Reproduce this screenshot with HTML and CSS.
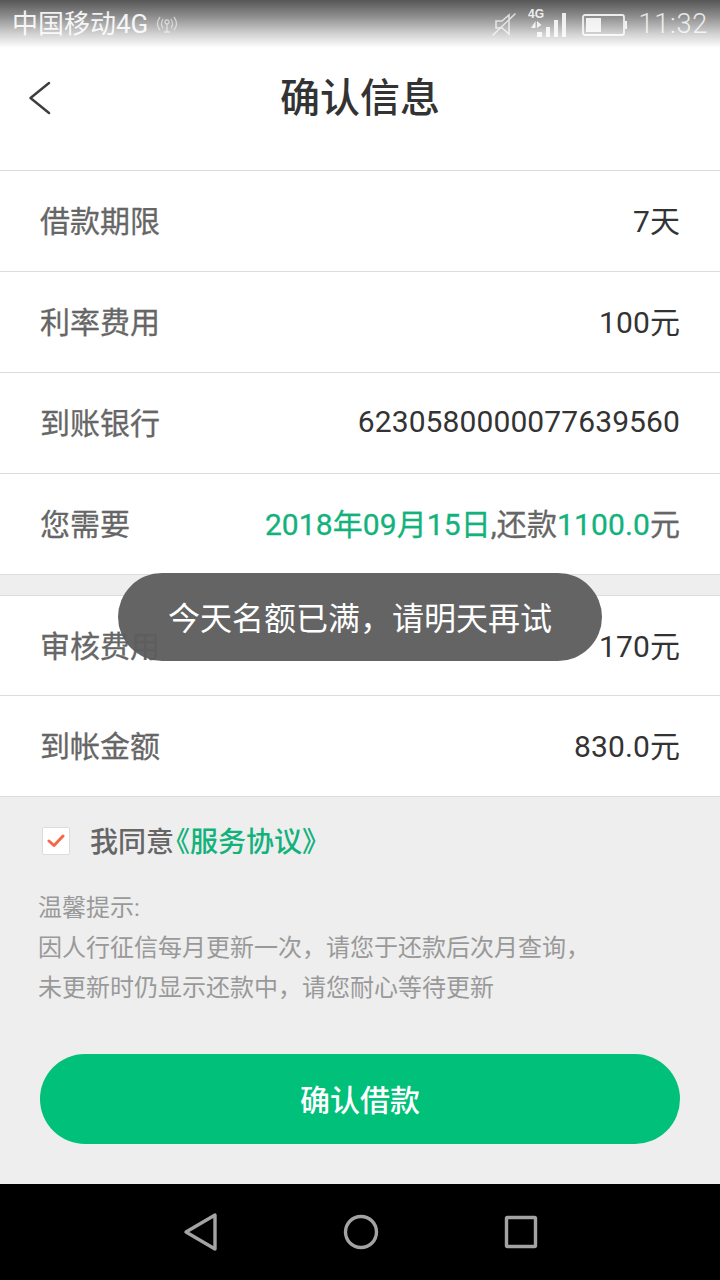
FILE: index.html
```html
<!DOCTYPE html>
<html lang="zh">
<head>
<meta charset="utf-8">
<title>确认信息</title>
<link rel="stylesheet" href="styles.css">
</head>
<body>
<div class="app">
  <div class="statusbar">
    <div class="status-left">
      <span class="carrier">中国移动4G</span>
      <svg class="hotspot" width="26" height="20" viewBox="0 0 26 20" fill="none" stroke="#fff" stroke-width="1.3" opacity=".55"><path d="M6 3Q1 10 6 16M9 5Q6 10 9 14M20 3Q25 10 20 16M17 5Q20 10 17 14"/><circle cx="13" cy="8" r="2"/><path d="M13 10V18M10 18H16"/></svg>
    </div>
    <div class="status-right">
      <svg width="26" height="26" viewBox="0 0 26 26" fill="none" stroke="#fff" stroke-width="1.6" opacity=".7"><path d="M5 10H11L18 4V23L11 17H5Z"/><path d="M1.500 24.500L24.500 2.500"/></svg>
      <svg class="signal" width="38" height="32" viewBox="0 0 38 32" fill="#fff" opacity=".85"><text x="0" y="10" class="net">4G</text><path d="M7.500 13V20H3L7.500 13ZM9 13L13.500 17L9 20ZM9 24H14V29H9ZM18 19H22V29H18ZM26 12H30V29H26ZM34 5H38V29H34Z"/></svg>
      <svg class="battery" width="46" height="24" viewBox="0 0 46 24" fill="none"><rect x="1" y="2" width="41" height="20" rx="2" stroke="#fff" stroke-width="1.800" opacity=".85"/><rect x="4" y="5" width="15" height="14" fill="#fff" opacity=".85"/><rect x="43" y="8" width="2" height="8" fill="#fff" opacity=".85"/></svg>
      <span class="time">11:32</span>
    </div>
  </div>

  <header class="navbar">
    <svg class="back" width="24" height="36" viewBox="0 0 24 36" fill="none" stroke="#3d3d3d" stroke-width="2.400" stroke-linecap="round" stroke-linejoin="round"><path d="M20 3L1.500 18L20 33"/></svg>
    <h1 class="title">确认信息</h1>
  </header>

  <section class="group">
    <div class="row"><span class="label">借款期限</span><span class="value">7天</span></div>
    <div class="row"><span class="label">利率费用</span><span class="value">100元</span></div>
    <div class="row"><span class="label">到账银行</span><span class="value">6230580000077639560</span></div>
    <div class="row"><span class="label">您需要</span><span class="value"><em class="green">2018年09月15日</em><span class="muted">,还款</span><em class="green">1100.0</em><span class="muted">元</span></span></div>
  </section>

  <section class="group second">
    <div class="row short"><span class="label">审核费用</span><span class="value">170元</span></div>
    <div class="row"><span class="label">到帐金额</span><span class="value">830.0元</span></div>
  </section>

  <main class="bottom">
    <div class="agree">
      <span class="check"><svg width="18" height="14" viewBox="0 0 18 14" fill="none" stroke="#f4684a" stroke-width="3" stroke-linecap="round" stroke-linejoin="round"><path d="M2 7L7 11.500L16 2"/></svg></span>
      <span class="agree-text">我同意<span class="link">《服务协议》</span></span>
    </div>
    <p class="tips">温馨提示:<br>因人行征信每月更新一次，请您于还款后次月查询，<br>未更新时仍显示还款中，请您耐心等待更新</p>
    <button class="confirm">确认借款</button>
  </main>

  <nav class="sysnav">
    <svg width="36" height="40" viewBox="0 0 36 40" fill="none" stroke="#a3a3a3" stroke-width="3.400" stroke-linejoin="round"><path d="M3 20L32 3V37Z"/></svg>
    <svg class="home" width="36" height="36" viewBox="0 0 36 36" fill="none" stroke="#a3a3a3" stroke-width="3.400"><circle cx="18" cy="18" r="15.500"/></svg>
    <svg width="34" height="34" viewBox="0 0 34 34" fill="none" stroke="#a3a3a3" stroke-width="3.400" stroke-linejoin="round"><rect x="2.500" y="2.500" width="29" height="29" rx="1"/></svg>
  </nav>

  <div class="toast">今天名额已满，请明天再试</div>
</div>
</body>
</html>
```
FILE: styles.css
```css
* { box-sizing: border-box; }
html, body { margin: 0; padding: 0; }
body { font-family: "Roboto", "Noto Sans CJK SC", sans-serif; background: #000; }
.app { position: relative; width: 720px; height: 1280px; display: flex; flex-direction: column; overflow: hidden; background: #eeeeee; }

.statusbar {
  height: 48px; flex: none; display: flex; justify-content: space-between; align-items: center;
  padding: 0 12px 0 13px;
  background: linear-gradient(#565656 0, #8c8c8c 16px, #d2d2d2 34px, #fff 48px);
  color: #fff;
}
.status-left, .status-right { display: flex; align-items: center; }
.carrier { font-size: 26px; line-height: 48px; opacity: .9; margin-left: -1px; }
.hotspot { margin-left: 6px; }
.signal { margin-left: 11px; margin-top: -1px; }
.net { font-family: "Liberation Sans", sans-serif; font-size: 12px; font-weight: 700; }
.battery { margin-left: 16px; margin-top: 1px; }
.time { font-size: 27px; font-weight: 300; letter-spacing: .8px; opacity: .8; margin-left: 10px; }

.navbar { position: relative; height: 122px; flex: none; display: flex; align-items: center; justify-content: center; padding-bottom: 20px; background: #fff; }
.back { position: absolute; left: 29px; top: 32px; }
.title { margin: 0; font-size: 40px; font-weight: 500; color: #333; line-height: 60px; }

.group { flex: none; background: #fff; border-top: 1px solid #dcdcdc; }
.second { margin-top: 20px; }
.row { height: 101px; padding: 0 40px 4px; display: flex; justify-content: space-between; align-items: center; border-bottom: 1px solid #dcdcdc; }
.row.short { height: 100px; }
.label { font-size: 30px; color: #666; -webkit-text-stroke: .3px #666; }
.value { font-size: 30px; color: #333; letter-spacing: .1px; }
.value em { font-style: normal; }
.green { color: #12b27c; letter-spacing: .1px; -webkit-text-stroke: .3px #12b27c; }
.muted { color: #666; -webkit-text-stroke: .3px #666; }

.bottom { flex: 1; padding: 0 40px; display: flex; flex-direction: column; }
.agree { display: flex; align-items: center; height: 28px; margin: 30px 0 0 2px; }
.check { width: 28px; height: 28px; background: #fff; border: 1px solid #dcdcdc; border-radius: 2px; display: flex; align-items: center; justify-content: center; }
.agree-text { margin-left: 20px; font-size: 28px; font-weight: 500; color: #666; position: relative; top: -1px; }
.link { color: #12b27c; font-feature-settings: "halt"; margin-left: 2px; }
.tips { margin: 33px 0 0 -2px; font-size: 24px; line-height: 40px; color: #999; }
.confirm { margin-top: 46px; height: 90px; width: 640px; flex: none; border: 0; border-radius: 45px; padding: 0 0 3px; background: #00c07a; color: #fff; font: 500 30px "Roboto", "Noto Sans CJK SC", sans-serif; }

.sysnav { height: 96px; flex: none; background: #000; position: relative; display: flex; align-items: center; justify-content: space-between; padding: 0 182px 0 183px; }
.home { margin-right: 2px; }

.toast { position: absolute; left: 118px; top: 573px; width: 484px; height: 88px; padding-bottom: 3px; border-radius: 44px; background: rgba(94,94,94,.96); color: #fff; font-size: 32px; display: flex; align-items: center; justify-content: center; }
```
